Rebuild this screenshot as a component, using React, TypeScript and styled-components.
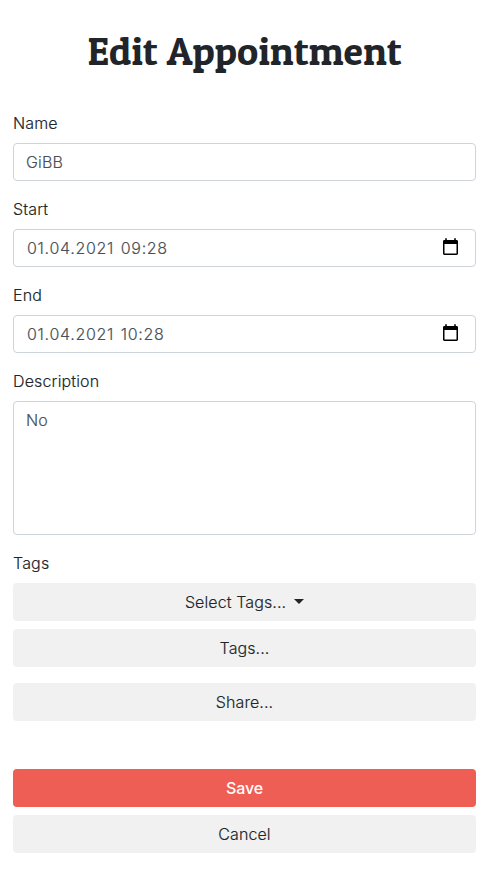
import React from "react";
import styled, { createGlobalStyle } from "styled-components";

const GlobalStyle = createGlobalStyle`
  *, *::before, *::after { box-sizing: border-box; }
  body {
    margin: 0;
    background: #fff;
    color: #212529;
    font: 300 16px/24px Inter, sans-serif;
    letter-spacing: 0.15px;
    -webkit-text-stroke: 0.15px currentColor;
  }
`;

const Page = styled.main`
  padding: 27px 13px 0;
`;

const Title = styled.h1`
  margin: 0 0 36px;
  font: 400 40px/48px "Patua One", Bitter, "Noto Serif", serif;
  letter-spacing: 0;
  text-align: center;
  white-space: nowrap;
  -webkit-text-stroke: 0;
`;

const Field = styled.div`
  margin-bottom: 16px;
`;

const Label = styled.label`
  display: block;
  margin-bottom: 8px;
`;

const Control = styled.div<{ $height?: number; $inset?: number }>`
  display: flex;
  align-items: flex-start;
  justify-content: space-between;
  height: ${(p) => p.$height ?? 38}px;
  padding: 6px 16px 6px ${(p) => p.$inset ?? 12}px;
  border: 1px solid #ced4da;
  border-radius: 4px;
  color: #495057;
  -webkit-text-stroke-color: #495057;
`;

const DateText = styled.span`
  letter-spacing: 0.7px;
  word-spacing: 1.5px;
`;

const Button = styled.button<{ $primary?: boolean; $gap?: number }>`
  display: flex;
  align-items: center;
  justify-content: center;
  width: 100%;
  height: 38px;
  margin: 0 0 ${(p) => p.$gap ?? 8}px;
  padding: 0;
  border: 0;
  border-radius: 4px;
  background: ${(p) => (p.$primary ? "#ef5e54" : "#f1f1f1")};
  color: ${(p) => (p.$primary ? "#fff" : "#212529")};
  font: inherit;
  font-weight: ${(p) => (p.$primary ? 500 : 300)};
  letter-spacing: ${(p) => (p.$primary ? "-0.15px" : "0.1px")};
  -webkit-text-stroke: ${(p) => (p.$primary ? "0" : "0.15px #212529")};
`;

const Caret = styled.span`
  margin: -2px 0 0 8px;
  border-top: 5px solid #212529;
  border-left: 5px solid transparent;
  border-right: 5px solid transparent;
`;

const CalendarIcon = () => (
  <svg width="16" height="20" viewBox="0 0 16 20" fill="#000">
    <path
      fillRule="evenodd"
      d="M2.200 2.300h1.600V4h7.400V2.300h1.600V4h.8c.8 0 1.400.6 1.400 1.400v12.200c0 .8-.6 1.400-1.400 1.400H1.400C.6 19 0 18.400 0 17.600V5.400C0 4.600.6 4 1.400 4h.8zM1.500 8v9.600h12V8z"
    />
  </svg>
);

const DateField = ({ label, value }: { label: string; value: string }) => (
  <Field>
    <Label>{label}</Label>
    <Control $inset={13}>
      <DateText>{value}</DateText>
      <CalendarIcon />
    </Control>
  </Field>
);

export default function App() {
  return (
    <>
      <GlobalStyle />
      <Page>
        <Title>Edit Appointment</Title>
        <Field>
          <Label>Name</Label>
          <Control>GiBB</Control>
        </Field>
        <DateField label="Start" value="01.04.2021 09:28" />
        <DateField label="End" value="01.04.2021 10:28" />
        <Field>
          <Label>Description</Label>
          <Control $height={134}>No</Control>
        </Field>
        <Label>Tags</Label>
        <Button>Select Tags...<Caret /></Button>
        <Button $gap={16}>Tags...</Button>
        <Button $gap={48}>Share...</Button>
        <Button $primary>Save</Button>
        <Button>Cancel</Button>
      </Page>
    </>
  );
}
